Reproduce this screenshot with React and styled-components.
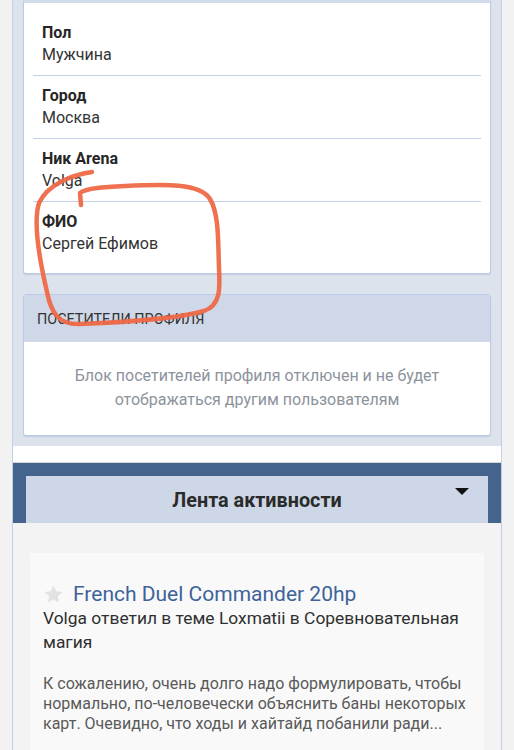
import React from "react";
import styled, { createGlobalStyle } from "styled-components";

const Global = createGlobalStyle`
  html, body { margin: 0; padding: 0; background: #f2f2f2; }
  body { font-family: Roboto, "Noto Sans", Arial, sans-serif; -webkit-font-smoothing: antialiased; }
  * { box-sizing: border-box; }
`;

const Page = styled.div`
  position: relative;
  width: 514px;
  height: 750px;
  overflow: hidden;
  background: #f2f2f2;
`;

const Column = styled.div`
  margin-left: 12px;
  width: 490px;
  border-left: 1px solid #c2cfe8;
  border-right: 1px solid #c2cfe8;
  background: #fff;
`;

const Panel = styled.div`
  background: #dce3ed;
  padding: 0 10px 10px;
  display: flex;
  flex-direction: column;
  gap: 20px;
`;

const Card = styled.div`
  background: #fff;
  border: 1px solid #bccbe5;
  border-top: ${(p) => (p.$cut ? "3px solid #d2dbea" : "1px solid #bccbe5")};
  border-radius: ${(p) => (p.$cut ? "0 0 3px 3px" : "3px")};
  box-shadow: 0 1px 1px rgba(120, 140, 170, 0.25);
  padding: ${(p) => (p.$cut ? "10px 9px 9px" : "0")};
  overflow: hidden;
`;

const Row = styled.div`
  padding: 9px 9px;
  border-bottom: ${(p) => (p.$last ? "none" : "1px solid #c3d0e8")};
`;

const Label = styled.div`
  font-weight: 700;
  font-size: 16px;
  line-height: 22px;
  color: #262626;
`;

const Value = styled.div`
  font-size: 16px;
  line-height: 22px;
  color: #333;
`;

const CardHead = styled.div`
  background: #cfd8e8;
  height: 47px;
  display: flex;
  align-items: center;
  padding-left: 13px;
  padding-top: 1px;
  font-size: 14.4px;
  color: #333;
  text-transform: uppercase;
`;

const CardNote = styled.div`
  padding: 22px 20px 23px;
  text-align: center;
  font-size: 16px;
  line-height: 24px;
  color: #8c939c;
`;

const WhiteGap = styled.div`
  height: 17px;
  background: #fff;
  border-bottom: 1px solid #d9d9d9;
`;

const Band = styled.div`
  background: #44648e;
  padding: 13px 13px 0;
`;

const BandHead = styled.div`
  position: relative;
  background: #cdd7e7;
  height: 47px;
  display: flex;
  align-items: center;
  justify-content: center;
  font-weight: 700;
  font-size: 19.8px;
  color: #2b2b2b;
  padding-top: 1px;
`;

const Caret = styled.span`
  position: absolute;
  right: 19px;
  top: 12px;
  width: 0;
  height: 0;
  border-left: 7px solid transparent;
  border-right: 7px solid transparent;
  border-top: 7px solid #111;
`;

const Feed = styled.div`
  background: #f3f3f3;
  padding: 30px 17px 40px;
`;

const FeedCard = styled.div`
  background: #f9f9f9;
  padding: 29px 8px 30px 13px;
`;

const TitleRow = styled.div`
  display: flex;
  align-items: center;
  gap: 9px;
`;

const Title = styled.div`
  font-size: 21px;
  line-height: 24px;
  color: #3e6399;
`;

const Meta = styled.div`
  font-size: 17.4px;
  line-height: 24px;
  color: #2f2f2f;
`;

const Excerpt = styled.div`
  margin-top: 20px;
  font-size: 16px;
  line-height: 20px;
  color: #5a5a5a;
`;

const Scribble = styled.svg`
  position: absolute;
  left: 0;
  top: 0;
  pointer-events: none;
`;

const Star = () => (
  <svg width="21" height="21" viewBox="0 0 24 24">
    <path
      d="M12 1.8l3.1 6.6 7.2.8-5.4 4.9 1.5 7.1L12 17.6l-6.4 3.6 1.5-7.1L1.7 9.2l7.2-.8z"
      fill="#e2e2e2"
    />
  </svg>
);

const rows = [
  ["Пол", "Мужчина"],
  ["Город", "Москва"],
  ["Ник Arena", "Volga"],
  ["ФИО", "Сергей Ефимов"],
];

export default function App() {
  return (
    <Page>
      <Global />
      <Column>
        <Panel>
          <Card $cut>
            {rows.map(([l, v], i) => (
              <Row key={l} $last={i === rows.length - 1}>
                <Label>{l}</Label>
                <Value>{v}</Value>
              </Row>
            ))}
          </Card>
          <Card>
            <CardHead>Посетители профиля</CardHead>
            <CardNote>
              Блок посетителей профиля отключен и не будет
              <br />
              отображаться другим пользователям
            </CardNote>
          </Card>
        </Panel>
        <WhiteGap />
        <Band>
          <BandHead>
            Лента активности
            <Caret />
          </BandHead>
        </Band>
        <Feed>
          <FeedCard>
            <TitleRow>
              <Star />
              <Title>French Duel Commander 20hp</Title>
            </TitleRow>
            <Meta>Volga ответил в теме Loxmatii в Соревновательная магия</Meta>
            <Excerpt>
              К сожалению, очень долго надо формулировать, чтобы нормально,
              по-человечески объяснить баны некоторых карт. Очевидно, что ходы и
              хайтайд побанили ради...
            </Excerpt>
          </FeedCard>
        </Feed>
      </Column>
      <Scribble width="514" height="750" viewBox="0 0 514 750">
        <path
          d="M92 172 C 72 175, 48 184, 39 203 C 33 222, 40 262, 47 292 C 51 312, 58 325, 80 324 C 130 322, 180 318, 204 311 C 221 305, 220 288, 219 268 C 218 240, 219 214, 210 199 C 200 183, 165 184, 125 186 C 105 187, 86 188, 80 193 L 81 205"
          fill="none"
          stroke="#ee6947"
          strokeWidth="4.5"
          strokeLinecap="round"
          strokeLinejoin="round"
          opacity="0.95"
        />
      </Scribble>
    </Page>
  );
}
